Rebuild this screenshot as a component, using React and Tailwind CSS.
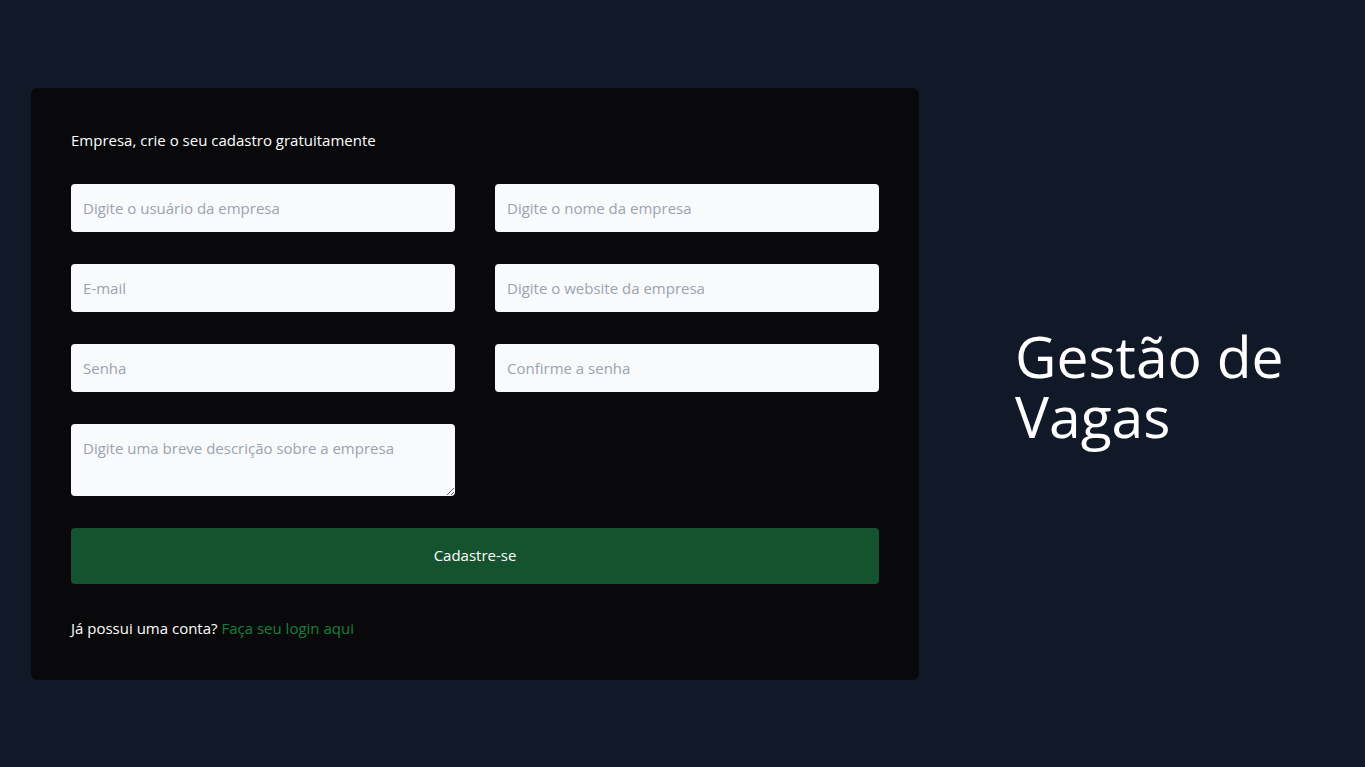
import React from "react";

export default function App() {
  const font = { fontFamily: '"Open Sans", "Noto Sans", sans-serif' };
  const inputCls =
    "h-12 w-full rounded bg-[#f8fafc] px-3 text-[15px] text-gray-900 placeholder:text-[#9ca3af] outline-none";
  return (
    <div
      className="flex min-h-[767px] w-full items-center bg-[#111827] pl-[31px]"
      style={font}
    >
      <div className="w-[888px] rounded-md bg-[#09090b] p-10">
        <p className="text-[15px] leading-6 text-white">
          Empresa, crie o seu cadastro gratuitamente
        </p>
        <div className="mt-8 grid grid-cols-2 gap-x-10 gap-y-8">
          <input className={inputCls} placeholder="Digite o usuário da empresa" />
          <input className={inputCls} placeholder="Digite o nome da empresa" />
          <input className={inputCls} placeholder="E-mail" />
          <input className={inputCls} placeholder="Digite o website da empresa" />
          <input className={inputCls} type="password" placeholder="Senha" />
          <input className={inputCls} type="password" placeholder="Confirme a senha" />
          <textarea
            className="block h-[72px] w-full rounded bg-[#f8fafc] px-3 py-3 text-[15px] leading-6 text-gray-900 placeholder:text-[#9ca3af] outline-none"
            placeholder="Digite uma breve descrição sobre a empresa"
          />
        </div>
        <button className="mt-8 flex h-14 w-full items-center justify-center rounded bg-[#14532d] text-[15px] text-white">
          Cadastre-se
        </button>
        <p className="mt-8 text-[15px] leading-6 text-white">
          Já possui uma conta?{" "}
          <a className="text-[#15803d]" href="#">
            Faça seu login aqui
          </a>
        </p>
      </div>
      <div className="ml-[96px] w-[300px] pt-[4px] text-[57px] leading-[60px] text-white">
        Gestão de Vagas
      </div>
    </div>
  );
}
